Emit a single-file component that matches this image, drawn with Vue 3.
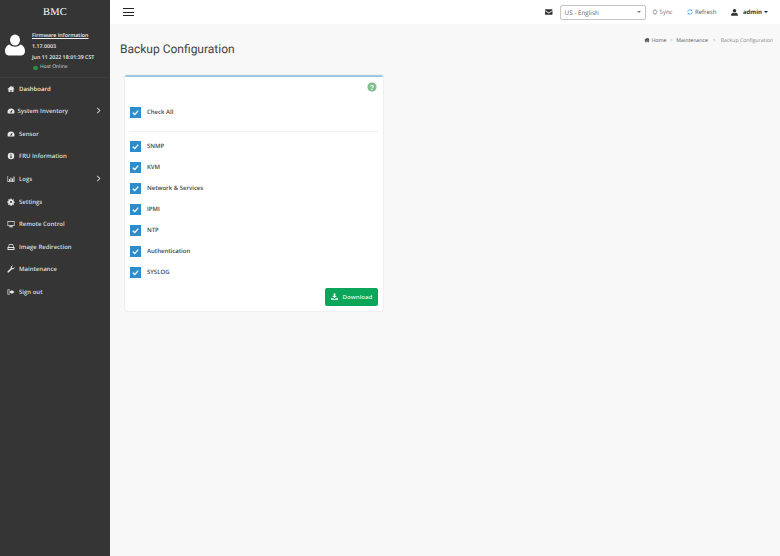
<script setup>
const home = 'M8 2 1 8l1 1 1-.8V14h4v-4h2v4h4V8.200l1 .8 1-1-2-1.700V3h-2v1.600z'
const gauge = 'M8 3a7 7 0 0 0-7 7c0 1.200.3 2.300.8 3h12.400c.5-.7.800-1.800.800-3a7 7 0 0 0-7-7zm0 8.500a1.500 1.500 0 0 1-.9-2.700L10 6l1 .6-1.600 3.900A1.500 1.500 0 0 1 8 11.500z'
const menu = [
  { label: 'Dashboard', d: home, active: true },
  { label: 'System Inventory', d: gauge, arrow: true, tight: true },
  { label: 'Sensor', d: gauge },
  { label: 'FRU Information', d: 'M8 1.500a6.500 6.500 0 1 0 0 13 6.500 6.500 0 0 0 0-13zM7 4h2v2H7zm-.5 3H9v4h1v1.200H6V11h1V8.200h-.5z' },
  { label: 'Logs', d: 'M1 2h1.300v10.700H15V14H1zm3 6h2v4H4zm3-3h2v7H7zm3 2h2v5h-2zm3-4h2v9h-2z', arrow: true },
  { label: 'Settings', d: 'M7 1h2l.4 2 1.400.6 1.700-1.100 1.400 1.400-1.100 1.700.6 1.400 2 .4v2l-2 .4-.6 1.400 1.100 1.700-1.400 1.400-1.700-1.100-1.400.6-.4 2H7l-.4-2-1.400-.6-1.700 1.100-1.400-1.400 1.100-1.700-.6-1.400-2-.4V7l2-.4.6-1.400L2.500 3.500l1.400-1.400 1.700 1.100L7 2.600zm1 5a2 2 0 1 0 0 4 2 2 0 0 0 0-4z' },
  { label: 'Remote Control', d: 'M1 2h14v10H9.500v1.200H12V14.500H4v-1.300h2.500V12H1zm1.300 1.300v7.400h11.400V3.300z' },
  { label: 'Image Redirection', d: 'M4 2h8l1.500 6H15v6H1V8h1.500zm1 1.300L3.900 8h8.200L11 3.300zM3 10v2h10v-2z' },
  { label: 'Maintenance', d: 'M15 4.500a4 4 0 0 1-5.300 3.800L3.800 14.700a1.600 1.600 0 0 1-2.500-2.200l6.300-6A4 4 0 0 1 12 1.200L9.500 3.700l.5 2.300 2.300.5L14.800 4z' },
  { label: 'Sign out', d: 'M1 3h5v1.500H2.500v7H6V13H1zm8 .500L15 8l-6 4.500V10H5V6h4z' },
]
const items = ['SNMP', 'KVM', 'Network & Services', 'IPMI', 'NTP', 'Authentication', 'SYSLOG']
</script>

<template>
  <div class="page">
    <aside class="side">
      <div class="brand">BMC</div>
      <div class="profile">
        <svg class="avatar" viewBox="0 0 20 20" preserveAspectRatio="none" aria-hidden="true">
          <circle cx="10" cy="5.500" r="5" fill="#fff" />
          <path d="M0 15.500C0 12 2.500 10 4.500 9.500c1.500 1.500 3.500 2 5.500 2s4-.5 5.500-2c2 .5 4.500 2.500 4.500 6 0 2.500-1.500 4-3.500 4h-13C1.500 19.500 0 18 0 15.500z" fill="#fff" />
        </svg>
        <div class="info">
          <div class="fw">Firmware Information</div>
          <div>1.17.0003</div>
          <div>Jun 11 2022 18:01:39 CST</div>
          <div class="host"><i class="dot"></i>Host Online</div>
        </div>
      </div>
      <nav class="nav">
        <a v-for="m in menu" :key="m.label" class="item" :class="{ tight: m.tight, active: m.active }">
          <svg class="nav-icon" viewBox="0 0 16 16" aria-hidden="true"><path :d="m.d" fill="#e6e6e6" fill-rule="evenodd" /></svg>
          <span class="lbl">{{ m.label }}</span>
          <svg v-if="m.arrow" class="chev" viewBox="0 0 8 8" aria-hidden="true"><path d="M2.500 1 5.500 4 2.500 7" fill="none" stroke="#c8c8c8" stroke-width="1.200" /></svg>
        </a>
      </nav>
    </aside>

    <div class="main">
      <header class="top">
        <button class="burger" aria-label="Menu"><span></span><span></span><span></span></button>
        <div class="top-right">
          <svg class="mail" viewBox="0 0 16 12" aria-hidden="true"><path d="M1 0h14a1 1 0 0 1 1 1v1L8 7 0 2V1a1 1 0 0 1 1-1zM0 4l8 5 8-5v7a1 1 0 0 1-1 1H1a1 1 0 0 1-1-1z" fill="#333" /></svg>
          <div class="select"><span>US - English</span><i class="caret"></i></div>
          <span class="tool sync">
            <svg viewBox="0 0 12 12" aria-hidden="true"><circle cx="6" cy="6" r="3.800" fill="none" stroke="#667" stroke-width="1.100" /><path d="M6 0v3M6 9v3" stroke="#667" stroke-width="1" /></svg>
            Sync
          </span>
          <span class="tool refresh">
            <svg viewBox="0 0 12 12" aria-hidden="true"><path d="M1.500 6a4.500 4.500 0 0 1 8-2.800M10.500 6a4.500 4.500 0 0 1-8 2.800" fill="none" stroke="#2e9ad6" stroke-width="1.400" /><path d="M10.500 0.500v3.500H7zM1.500 11.500V8H5z" fill="#2e9ad6" /></svg>
            Refresh
          </span>
          <span class="user">
            <svg viewBox="0 0 12 12" aria-hidden="true"><circle cx="6" cy="3.200" r="3" fill="#333" /><path d="M0 11.500c0-3 1.500-4.500 3.500-5 1.500 1 3.500 1 5 0 2 .5 3.500 2 3.500 5z" fill="#333" /></svg>
            <b>admin</b><i class="caret dark"></i>
          </span>
        </div>
      </header>

      <div class="content">
        <div class="head">
          <h1>Backup Configuration</h1>
          <div class="crumbs">
            <svg viewBox="0 0 16 16" aria-hidden="true"><path :d="home" fill="#555" /></svg>
            <span>Home</span><em class="first">&gt;</em><span>Maintenance</span><em>&gt;</em><span class="cur">Backup Configuration</span>
          </div>
        </div>

        <section class="card">
          <div class="help">
            <svg viewBox="0 0 12 12" aria-hidden="true"><circle cx="6" cy="6" r="5.500" fill="#7fbf8e" /><text x="6" y="9.200" text-anchor="middle" class="q">?</text></svg>
          </div>
          <label class="row all">
            <span class="box"><svg viewBox="0 0 12 12" aria-hidden="true"><path d="M3 6.200 5.200 8.300 9 4" fill="none" stroke="#fff" stroke-width="1.500" /></svg></span>
            Check All
          </label>
          <hr />
          <div class="list">
            <label v-for="it in items" :key="it" class="row">
              <span class="box"><svg viewBox="0 0 12 12" aria-hidden="true"><path d="M3 6.200 5.200 8.300 9 4" fill="none" stroke="#fff" stroke-width="1.500" /></svg></span>
              {{ it }}
            </label>
          </div>
          <div class="foot">
            <button class="dl">
              <svg viewBox="0 0 12 12" aria-hidden="true"><path d="M4.500 1h3v4H10L6 8.500 2 5h2.500zM0 9h3.500L6 10.500 8.500 9H12v2.500H0z" fill="#fff" /></svg>
              Download
            </button>
          </div>
        </section>
      </div>
    </div>
  </div>
</template>

<style>
html, body { margin: 0; padding: 0; }
</style>

<style scoped>
.page { display: flex; width: 780px; height: 556px; overflow: hidden; font-family: "Open Sans", "Liberation Sans", sans-serif; text-rendering: geometricPrecision; }
.side { width: 110px; flex: none; background: #353535; color: #eee; }
.brand { height: 26px; text-align: center; font: 10.500px/26px "Liberation Serif", serif; color: #fff; letter-spacing: .2px; }
.profile { display: flex; height: 51.500px; padding-left: 5px; box-sizing: border-box; border-bottom: 1px solid #3e3e3e; }
.avatar { width: 20px; height: 22px; margin-top: 8px; flex: none; }
.info { margin-left: 7px; font-size: 5.300px; line-height: 10.800px; font-weight: 600; color: #f0f0f0; white-space: nowrap; padding-top: 4px; }
.fw { text-decoration: underline; }
.host { display: flex; align-items: center; font-size: 5px; font-weight: 400; color: #ddd; padding-left: 1px; }
.dot { width: 4.500px; height: 4.500px; border-radius: 50%; background: #2f8f3a; margin-right: 2.500px; }
.nav { display: flex; flex-direction: column; }
.item { display: flex; align-items: center; height: 22.550px; padding-left: 7px; position: relative; font-size: 6px; font-weight: 600; color: #dedede; }
.item.active { color: #f0e2c8; }
.nav-icon { width: 8px; height: 8px; flex: none; margin-right: 4px; }
.tight .nav-icon { margin-right: 2.500px; }
.chev { position: absolute; right: 8px; top: 7px; width: 7px; height: 7px; }

.main { flex: 1; min-width: 0; display: flex; flex-direction: column; background: #f8f8f8; }
.top { height: 24px; flex: none; background: #fff; display: flex; align-items: center; justify-content: space-between; padding: 0 12px 0 13px; box-sizing: border-box; }
.burger { display: flex; flex-direction: column; justify-content: space-between; width: 11px; height: 8px; padding: 0; border: 0; background: none; }
.burger span { display: block; height: 1px; background: #222; }
.top-right { display: flex; align-items: center; height: 100%; font-size: 6px; color: #444; }
.mail { width: 7.500px; height: 6px; margin-right: 7.500px; }
.select { width: 86px; height: 15px; box-sizing: border-box; border: 1px solid #c4c4c4; border-radius: 2px; display: flex; align-items: center; justify-content: space-between; padding: 0 4px 0 3.500px; color: #666; font-size: 6.300px; }
.caret { width: 0; height: 0; border-left: 2px solid transparent; border-right: 2px solid transparent; border-top: 2.500px solid #777; }
.caret.dark { border-top-color: #222; margin-left: 2px; }
.tool { display: flex; align-items: center; }
.tool svg { width: 6px; height: 6px; margin-right: 1.500px; }
.sync { margin-left: 6px; color: #667; }
.refresh { margin-left: 15px; color: #555; }
.user { display: flex; align-items: center; margin-left: 15px; color: #333; }
.user svg { width: 7px; height: 7px; margin-right: 4.500px; }
.user b { font-weight: 700; }

.content { flex: 1; padding: 0 7px 0 10px; }
.head { display: flex; justify-content: space-between; height: 51px; }
h1 { margin: 17px 0 0; font: 400 12px/16px Roboto, "Liberation Sans", sans-serif; color: #444; }
.crumbs { display: flex; align-items: center; height: 10px; margin-top: 11px; font-size: 5.200px; color: #555; }
.crumbs svg { width: 6px; height: 6px; margin-right: 2px; }
.crumbs em { font-style: normal; color: #bbb; margin: 0 5px; }
.crumbs em.first { margin: 0 3.500px; }
.crumbs .cur { color: #888; }

.card { width: 258px; height: 236px; margin-left: 5px; box-sizing: border-box; background: #fff; border-top: 2px solid #9cc8e4; border-radius: 2px; box-shadow: 0 0 2px rgba(0,0,0,.14); padding: 0 5px; }
.help { display: flex; justify-content: flex-end; padding: 5px 1px 0 0; height: 17px; box-sizing: border-box; }
.help svg { width: 10px; height: 10px; }
.q { font: 700 8.500px "Liberation Sans", sans-serif; fill: #fff; }
.row { display: flex; align-items: center; height: 21px; font-size: 6px; font-weight: 600; color: #444; }
.all { margin-top: 7.500px; }
.box { width: 11px; height: 11px; background: #2d8ccb; margin-right: 6px; display: flex; flex: none; }
.box svg { width: 11px; height: 11px; }
hr { border: 0; border-top: 1px solid #eee; margin: 8.500px 0 3.500px; }
.list { display: flex; flex-direction: column; }
.foot { display: flex; justify-content: flex-end; margin-top: 5px; }
.dl { width: 53px; height: 18px; border: 0; border-radius: 2px; background: #0ca65b; color: #dff5e8; font: 600 6.100px "Open Sans", sans-serif; display: flex; align-items: center; justify-content: center; gap: 5px; padding: 0; }
.dl svg { width: 7px; height: 7px; }
</style>
